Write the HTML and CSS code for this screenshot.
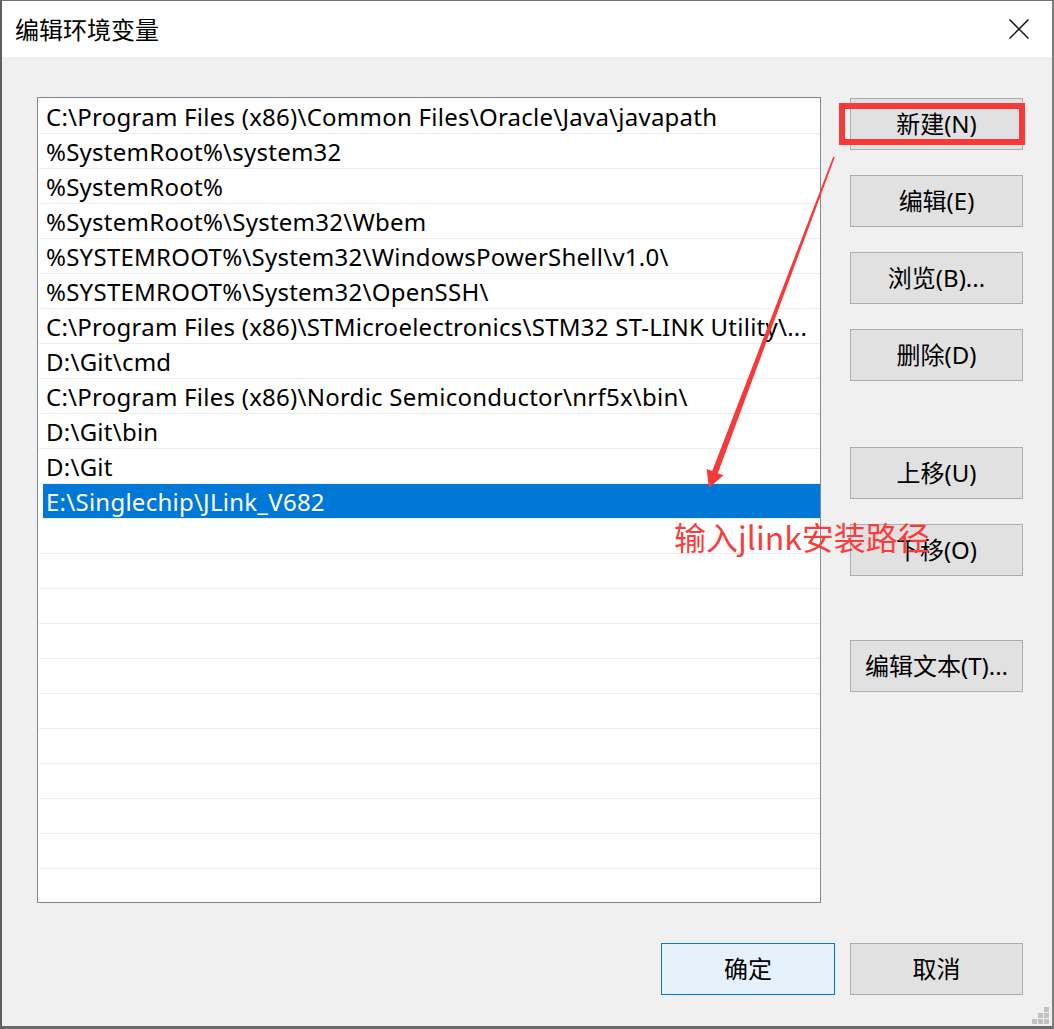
FILE: index.html
```html
<!DOCTYPE html>
<html lang="zh-CN">
<head>
<meta charset="utf-8">
<title>编辑环境变量</title>
<link rel="stylesheet" href="styles.css">
</head>
<body>
<div class="window">
  <div class="titlebar">
    <span class="title">编辑环境变量</span>
    <svg class="close" width="20" height="20" viewBox="0 0 20 20" aria-label="关闭">
      <path d="M0.5 0.5 L19.5 19.5 M19.5 0.5 L0.5 19.5" stroke="#111" stroke-width="1.5" fill="none"/>
    </svg>
  </div>
  <div class="content">
    <div class="list">
      <div class="row">C:\Program Files (x86)\Common Files\Oracle\Java\javapath</div>
      <div class="row">%SystemRoot%\system32</div>
      <div class="row">%SystemRoot%</div>
      <div class="row">%SystemRoot%\System32\Wbem</div>
      <div class="row">%SYSTEMROOT%\System32\WindowsPowerShell\v1.0\</div>
      <div class="row">%SYSTEMROOT%\System32\OpenSSH\</div>
      <div class="row">C:\Program Files (x86)\STMicroelectronics\STM32 ST-LINK Utility\...</div>
      <div class="row">D:\Git\cmd</div>
      <div class="row">C:\Program Files (x86)\Nordic Semiconductor\nrf5x\bin\</div>
      <div class="row">D:\Git\bin</div>
      <div class="row">D:\Git</div>
      <div class="row selected"><div class="edit">E:\Singlechip\JLink_V682</div></div>
      <div class="row"></div>
      <div class="row"></div>
      <div class="row"></div>
      <div class="row"></div>
      <div class="row"></div>
      <div class="row"></div>
      <div class="row"></div>
      <div class="row"></div>
      <div class="row"></div>
      <div class="row"></div>
      <div class="row"></div>
    </div>
    <div class="side">
      <button class="btn">新建(N)</button>
      <button class="btn">编辑(E)</button>
      <button class="btn">浏览(B)...</button>
      <button class="btn">删除(D)</button>
      <button class="btn group">上移(U)</button>
      <button class="btn">下移(O)</button>
      <button class="btn group2">编辑文本(T)...</button>
    </div>
  </div>
  <div class="footer">
    <button class="btn ok">确定</button>
    <button class="btn">取消</button>
  </div>
  <svg class="grip" width="17" height="17" viewBox="0 0 17 17">
    <rect x="12" y="0" width="5" height="5" fill="#c2c2c2"/>
    <rect x="6" y="6" width="5" height="5" fill="#c2c2c2"/>
    <rect x="12" y="6" width="5" height="5" fill="#c2c2c2"/>
    <rect x="0" y="12" width="5" height="5" fill="#c2c2c2"/>
    <rect x="6" y="12" width="5" height="5" fill="#c2c2c2"/>
    <rect x="12" y="12" width="5" height="5" fill="#c2c2c2"/>
  </svg>
  <svg class="overlay" width="1054" height="1029" viewBox="0 0 1054 1029">
    <rect x="842" y="106" width="180" height="36" fill="none" stroke="#f7393a" stroke-width="6"/>
    <polygon points="833.3,156.5 834.7,157.5 717.8,473.2 723.4,475.3 709,488 706.6,468.9 712.2,471" fill="#f7393a"/>
  </svg>
  <span class="annot">输入jlink安装路径</span>
</div>
</body>
</html>
```

FILE: styles.css
```css
* {
  box-sizing: border-box;
}

html, body {
  margin: 0;
  padding: 0;
  background: #4d4d4d;
}

body {
  width: 1054px;
  height: 1029px;
  overflow: hidden;
  font-family: "Noto Sans", "Noto Sans CJK SC", sans-serif;
  color: #000;
}

.window {
  position: relative;
  width: 1054px;
  height: 1029px;
  background: #f0f0f0;
  border-top: 1px solid #707070;
  border-left: 2px solid #5e5e5e;
  border-right: 2px solid #7c7c7c;
  border-bottom: 3px solid #6a6a6a;
  display: flex;
  flex-direction: column;
}

.titlebar {
  height: 56px;
  background: #fff;
  display: flex;
  align-items: center;
  justify-content: space-between;
  padding-left: 13px;
  padding-right: 23px;
  flex: none;
}

.title {
  font-family: "Noto Sans CJK SC", sans-serif;
  font-size: 24px;
  line-height: 30px;
  color: #000;
}

.close {
  display: block;
}

.content {
  display: flex;
  align-items: flex-start;
  padding-top: 40px;
  padding-left: 35px;
  flex: none;
}

.list {
  width: 784px;
  height: 806px;
  border: 1px solid #828790;
  background: #fff;
  padding-top: 1px;
  overflow: hidden;
  flex: none;
}

.row {
  height: 35px;
  margin-left: 1px;
  border-bottom: 1px solid #ececec;
  padding-left: 7px;
  padding-top: 1px;
  font-size: 24px;
  letter-spacing: 0.25px;
  line-height: 34px;
  white-space: nowrap;
  overflow: hidden;
}

.row.selected {
  padding-left: 0;
  padding-top: 0;
}

.edit {
  margin-left: 4px;
  height: 34px;
  background: #0078d7;
  color: #fff;
  padding-left: 3px;
  padding-top: 1px;
  line-height: 33px;
}

.side {
  margin-left: 29px;
  width: 173px;
  padding-top: 1px;
  display: flex;
  flex-direction: column;
  flex: none;
}

.btn {
  height: 52px;
  width: 173px;
  background: #e1e1e1;
  border: 1px solid #adadad;
  font-family: "Noto Sans", "Noto Sans CJK SC", sans-serif;
  font-size: 24px;
  color: #000;
  padding: 0;
  margin: 0;
  line-height: 30px;
  text-align: center;
}

.side .btn + .btn {
  margin-top: 25px;
}

.side .btn.group {
  margin-top: 66px;
}

.side .btn.group2 {
  margin-top: 64px;
}

.footer {
  margin-top: 40px;
  display: flex;
  justify-content: flex-end;
  gap: 15px;
  padding-right: 29px;
  flex: none;
}

.btn.ok {
  width: 174px;
  background: #e5f1fb;
  border-color: #0078d7;
}

.grip {
  position: absolute;
  right: 3px;
  bottom: 2px;
}

.overlay {
  position: absolute;
  left: -2px;
  top: -1px;
  pointer-events: none;
}

.annot {
  position: absolute;
  left: 672px;
  top: 519px;
  font-family: "Noto Sans CJK SC", sans-serif;
  font-size: 32px;
  line-height: 32px;
  color: #fa3c3c;
  white-space: nowrap;
}
```
